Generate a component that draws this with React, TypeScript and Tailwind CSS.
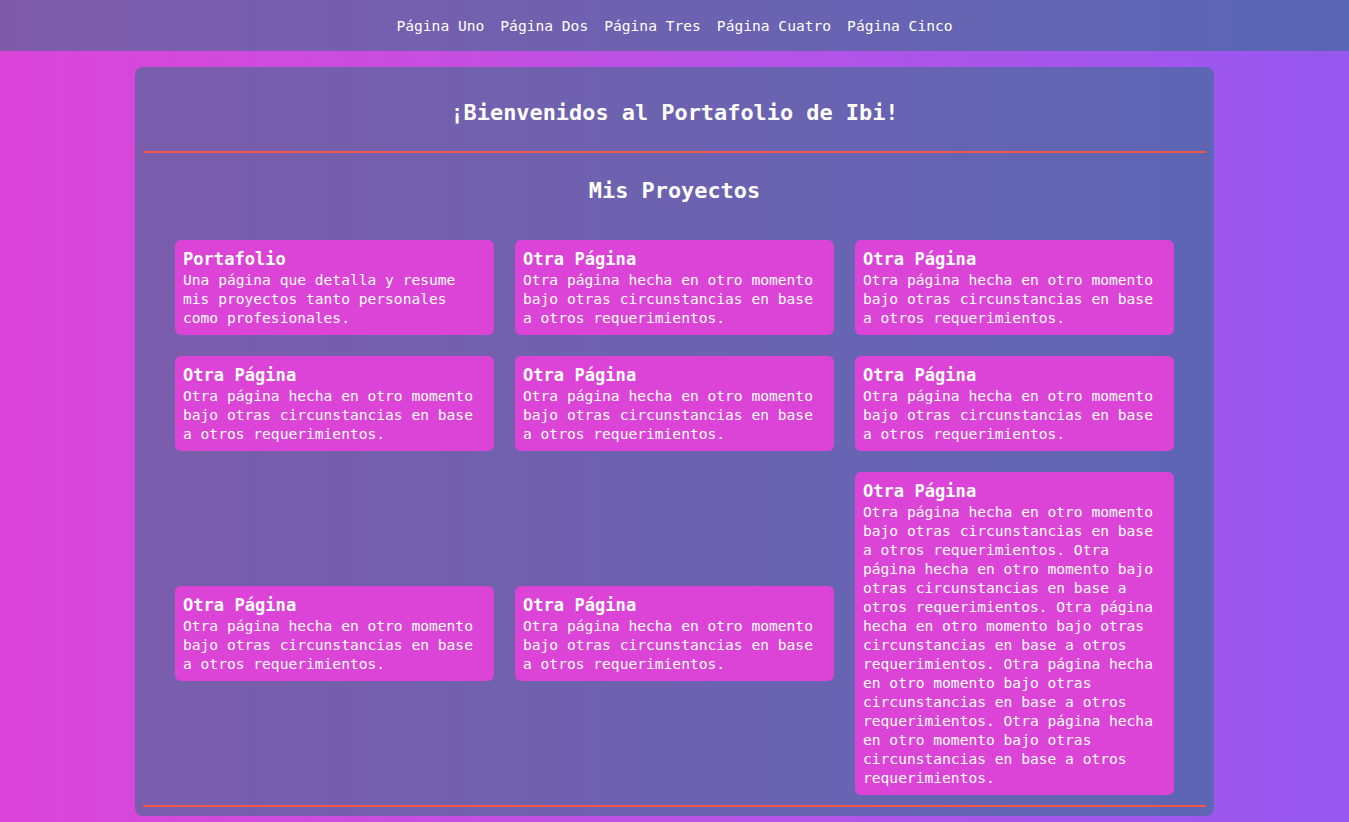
import React from "react";

const mono = "font-['DejaVu_Sans_Mono','Liberation_Mono',monospace]";

const links = ["Página Uno", "Página Dos", "Página Tres", "Página Cuatro", "Página Cinco"];

const otra =
  "Otra página hecha en otro momento bajo otras circunstancias en base a otros requerimientos.";

type Project = { title: string; text: string };

const projects: Project[] = [
  {
    title: "Portafolio",
    text: "Una página que detalla y resume mis proyectos tanto personales como profesionales.",
  },
  { title: "Otra Página", text: otra },
  { title: "Otra Página", text: otra },
  { title: "Otra Página", text: otra },
  { title: "Otra Página", text: otra },
  { title: "Otra Página", text: otra },
  { title: "Otra Página", text: otra },
  { title: "Otra Página", text: otra },
  { title: "Otra Página", text: [otra, otra, otra, otra, otra].join(" ") },
];

const ProjectCard: React.FC<Project> = ({ title, text }) => (
  <div className="bg-[#dc44d8] rounded-md px-2 pt-2 pb-2">
    <h3 className="text-[17.1px] leading-[22px] font-bold">{title}</h3>
    <p className="text-[14.6px] leading-[19px]">{text}</p>
  </div>
);

export default function App() {
  return (
    <div className={`${mono} min-h-screen text-white bg-gradient-to-r from-[#dc44d8] to-[#9658f0]`}>
      <header className="h-[51px] bg-[rgba(29,116,122,0.49)] flex items-center justify-center">
        <nav className="flex gap-4 text-[14.6px] leading-[19px]">
          {links.map((l) => (
            <a key={l} href="#" className="text-white">
              {l}
            </a>
          ))}
        </nav>
      </header>

      <main className="mx-[135px] mt-4 rounded-lg bg-[rgba(29,116,122,0.49)] pt-8 pb-[9px]">
        <h2 className="text-center text-[21.9px] leading-[28px] font-bold">
          ¡Bienvenidos al Portafolio de Ibi!
        </h2>
        <div className="mx-2 mt-6 h-[2px] bg-[#f0574b]" />

        <h2 className="mt-6 text-center text-[21.9px] leading-[28px] font-bold">Mis Proyectos</h2>

        <div className="mt-[35px] px-10 grid grid-cols-3 gap-[21px] items-center">
          {projects.map((p, i) => (
            <ProjectCard key={i} {...p} />
          ))}
        </div>

        <div className="mx-2 mt-[10px] h-[2px] bg-[#f0574b]" />
      </main>
    </div>
  );
}
